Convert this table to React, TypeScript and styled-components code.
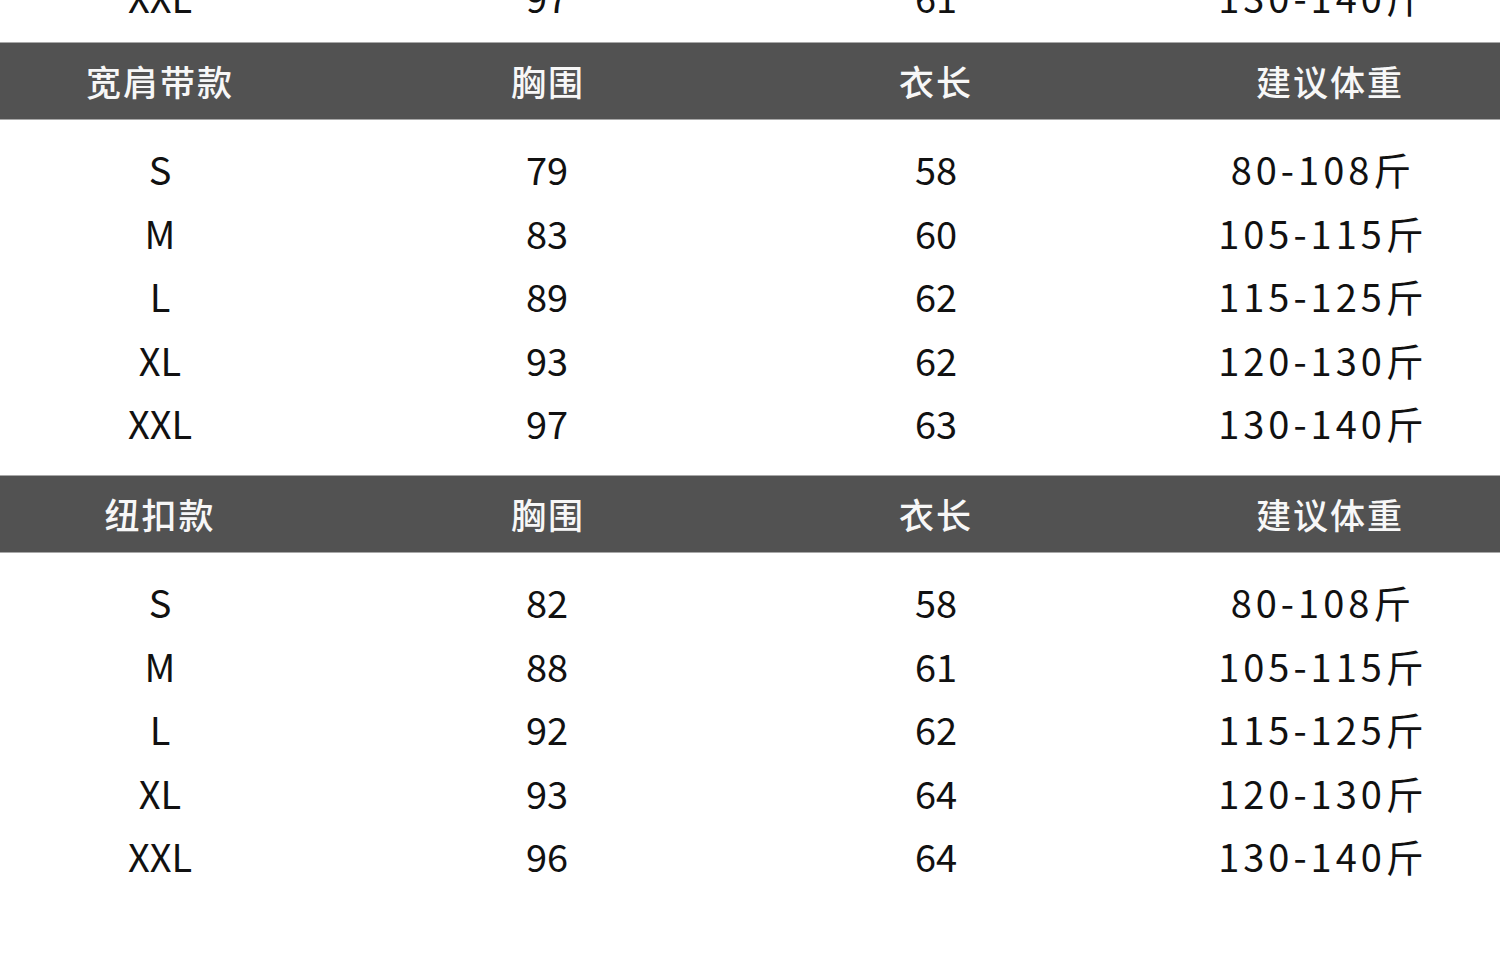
import React from "react";
import styled, { createGlobalStyle } from "styled-components";

const GlobalStyle = createGlobalStyle`
  html, body {
    margin: 0;
    padding: 0;
    background: #ffffff;
    overflow: hidden;
  }
  body {
    font-family: "Noto Sans CJK SC", "Noto Sans", sans-serif;
    color: #111111;
  }
`;

const Page = styled.div`
  width: 1500px;
  height: 980px;
  overflow: hidden;
  background: #ffffff;
  display: flex;
  flex-direction: column;
`;

const Grid = styled.div`
  display: grid;
  grid-template-columns: repeat(4, 320px);
  column-gap: 68px;
`;

const HeaderBar = styled(Grid)`
  height: 78px;
  align-items: center;
  background: #525252;
  border-top: 1px solid #a8a8a8;
  border-bottom: 1px solid #a8a8a8;
  box-sizing: border-box;
`;

const HeadCell = styled.div<{ $shift?: number }>`
  text-align: center;
  color: #f7f7f7;
  font-size: 35px;
  font-weight: 500;
  letter-spacing: 2px;
  line-height: 1;
  margin-top: 0px;
  transform: translateX(${(p) => p.$shift ?? 0}px);
`;

const Body = styled.div<{ $top: number; $bottom: number; $pull?: number }>`
  margin-top: ${(p) => -(p.$pull ?? 0)}px;
  padding-top: ${(p) => p.$top}px;
  padding-bottom: ${(p) => p.$bottom}px;
`;

const Row = styled(Grid)`
  height: 63.5px;
  align-items: center;
`;

const Cell = styled.div<{ $spaced?: boolean; $shift?: number }>`
  text-align: center;
  font-size: 38px;
  line-height: 1;
  letter-spacing: ${(p) => (p.$spaced ? "4px" : "0px")};
  color: #111111;
  transform: translateX(${(p) => p.$shift ?? 0}px);
`;

type RowData = [string, string, string, string];

const sectionA: RowData[] = [
  ["S", "79", "58", "80-108斤"],
  ["M", "83", "60", "105-115斤"],
  ["L", "89", "62", "115-125斤"],
  ["XL", "93", "62", "120-130斤"],
  ["XXL", "97", "63", "130-140斤"],
];

const sectionB: RowData[] = [
  ["S", "82", "58", "80-108斤"],
  ["M", "88", "61", "105-115斤"],
  ["L", "92", "62", "115-125斤"],
  ["XL", "93", "64", "120-130斤"],
  ["XXL", "96", "64", "130-140斤"],
];

const DataRow: React.FC<{ row: RowData }> = ({ row }) => (
  <Row>
    <Cell>{row[0]}</Cell>
    <Cell $shift={-1}>{row[1]}</Cell>
    <Cell $shift={0}>{row[2]}</Cell>
    <Cell $spaced $shift={-1}>{row[3]}</Cell>
  </Row>
);

const Header: React.FC<{ title: string }> = ({ title }) => (
  <HeaderBar>
    <HeadCell>{title}</HeadCell>
    <HeadCell>胸围</HeadCell>
    <HeadCell>衣长</HeadCell>
    <HeadCell $shift={6}>建议体重</HeadCell>
  </HeaderBar>
);

export default function App() {
  return (
    <>
      <GlobalStyle />
      <Page>
        <Body $top={0} $bottom={13} $pull={35}>
          <DataRow row={["XXL", "97", "61", "130-140斤"]} />
        </Body>
        <Header title="宽肩带款" />
        <Body $top={18} $bottom={19.5}>
          {sectionA.map((r) => (
            <DataRow key={"a" + r[0]} row={r} />
          ))}
        </Body>
        <Header title="纽扣款" />
        <Body $top={18} $bottom={0}>
          {sectionB.map((r) => (
            <DataRow key={"b" + r[0]} row={r} />
          ))}
        </Body>
      </Page>
    </>
  );
}
